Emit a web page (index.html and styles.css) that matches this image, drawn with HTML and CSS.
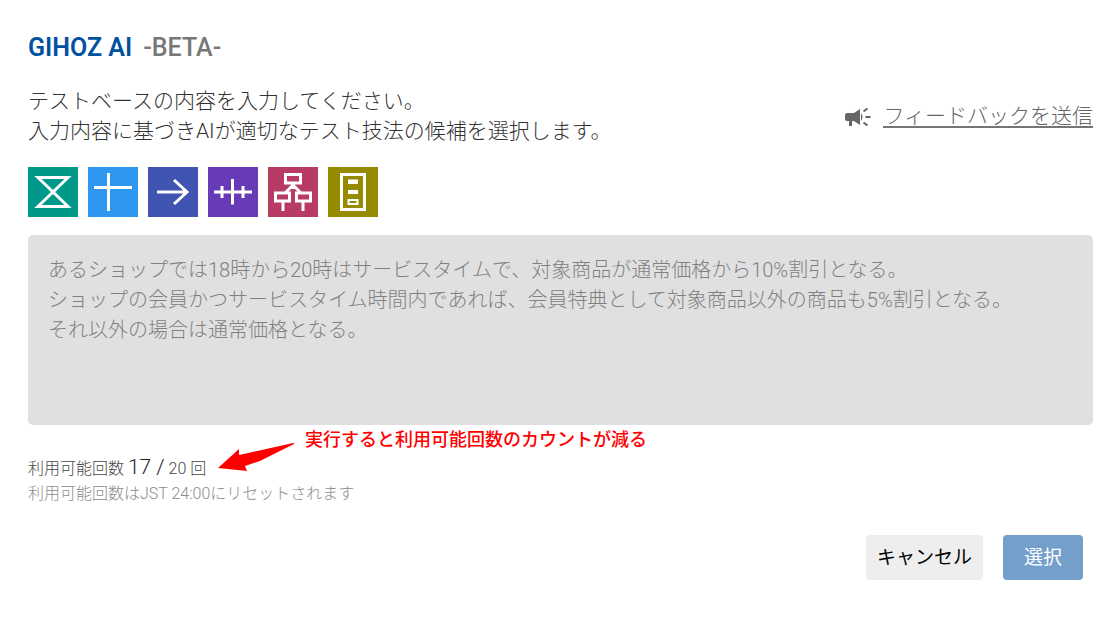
FILE: index.html
```html
<!DOCTYPE html>
<html lang="ja">
<head>
<meta charset="utf-8">
<meta name="viewport" content="width=device-width, initial-scale=1">
<title>GIHOZ AI</title>
<link rel="stylesheet" href="styles.css">
</head>
<body>
<main class="dialog">
  <h1 class="title">GIHOZ AI <span class="beta">-BETA-</span></h1>
  <div class="intro">
    <label class="lead" for="basis">テストベースの内容を入力してください。<br>入力内容に基づきAIが適切なテスト技法の候補を選択します。</label>
    <a class="feedback" href="#feedback">
      <svg class="horn" viewBox="0 0 26 22" aria-hidden="true">
        <path d="M2 7h7l6-4v16l-6-4H7v5H4v-5H2a2 2 0 0 1-2-2V9a2 2 0 0 1 2-2z" fill="currentColor"/>
        <path d="M16 7q3 4 0 8z" fill="currentColor"/>
        <path d="M18.500 5.500l4-3M20.500 11h5M18.500 16.500l4 3" fill="none" stroke="currentColor" stroke-width="2"/>
      </svg>
      <span class="feedback-text">フィードバックを送信</span>
    </a>
  </div>
  <div class="techniques">
    <svg class="tile teal" viewBox="0 0 50 50" aria-hidden="true"><path d="M10 10.500H40L10 39.500H40Z"/></svg>
    <svg class="tile sky" viewBox="0 0 50 50" aria-hidden="true"><path d="M6 20.500H44M20.500 6V44"/></svg>
    <svg class="tile indigo" viewBox="0 0 50 50" aria-hidden="true"><path d="M9 25H39M26 13L39 25L26 37"/></svg>
    <svg class="tile violet" viewBox="0 0 50 50" aria-hidden="true"><path d="M6 25H44M14 19V31M24.500 12V37.500M35 19V31"/></svg>
    <svg class="tile rose" viewBox="0 0 50 50" aria-hidden="true"><path d="M17.500 7.500H32.500V16H17.500ZM7.500 26H21.500V34H7.500ZM28.500 26H42.500V34H28.500ZM25 17V22M25 18L17 26M25 18L33 26M15 34V44M35 34V44"/></svg>
    <svg class="tile olive" viewBox="0 0 50 50" aria-hidden="true"><path d="M13.500 7.500H36.500V42.500H13.500Z"/><path class="solid" d="M20 12.500h10v4.500H20zM20 23h10v4H20z"/><path class="thin" d="M20.500 33h9v4h-9z"/></svg>
  </div>
  <textarea class="basis" id="basis" disabled placeholder="あるショップでは18時から20時はサービスタイムで、対象商品が通常価格から10%割引となる。&#10;ショップの会員かつサービスタイム時間内であれば、会員特典として対象商品以外の商品も5%割引となる。&#10;それ以外の場合は通常価格となる。"></textarea>
  <div class="usage">
    <p class="count">利用可能回数 <span class="used">17 /</span> 20 回</p>
    <p class="reset">利用可能回数はJST 24:00にリセットされます</p>
    <div class="note">
      <svg class="arrow" viewBox="0 0 78 32" aria-hidden="true"><path d="M0 26L21 7V13L75 1Q77 1 76 2L42 19L27 24L29 29Z" fill="#f00"/></svg>
      <span class="note-text">実行すると利用可能回数のカウントが減る</span>
    </div>
  </div>
  <div class="actions">
    <button class="button cancel" type="button">キャンセル</button>
    <button class="button select" type="button">選択</button>
  </div>
</main>
</body>
</html>
```
FILE: styles.css
```css
* { box-sizing: border-box; }
body {
  margin: 0;
  background: #fff;
  color: #333;
  font-family: Roboto, "Noto Sans CJK JP", sans-serif;
  font-weight: 300;
}
.dialog { padding: 32px 26px 38px 28px; }
.title {
  margin: 0;
  color: #0051a0;
  font-size: 25px;
  font-weight: 600;
  line-height: 32px;
}
.beta { margin-left: 5px; color: #777; font-weight: 500; }
.intro {
  display: flex;
  justify-content: space-between;
  align-items: center;
  margin-top: 22px;
}
.lead { font-size: 21px; line-height: 30px; }
.feedback {
  display: flex;
  align-items: center;
  gap: 12px;
  padding-top: 2px;
  color: #666;
  font-size: 21px;
  text-decoration: none;
}
.horn { width: 26px; height: 22px; }
.feedback-text { border-bottom: 2px solid #757575; line-height: 20px; }
.techniques { display: flex; gap: 10px; margin-top: 21px; }
.tile {
  width: 50px;
  height: 50px;
  fill: none;
  stroke: #fff;
  stroke-width: 3;
}
.solid { fill: #fff; stroke: none; }
.thin { stroke-width: 2; }
.teal { background: #009888; }
.sky { background: #2e98f0; }
.indigo { background: #4054b2; }
.violet { background: #673ab7; }
.rose { background: #b83b66; }
.olive { background: #968a00; }
.basis {
  display: block;
  width: 100%;
  height: 190px;
  margin-top: 18px;
  padding: 20px;
  border: 0;
  border-radius: 5px;
  background: #e0e0e0;
  font: 300 20px/30px Roboto, "Noto Sans CJK JP", sans-serif;
  resize: none;
}
.basis::placeholder { color: #808080; opacity: 1; }
.usage { position: relative; padding-top: 30px; }
.count, .reset { margin: 0; font-size: 16px; line-height: 25px; }
.count { color: #444; }
.used { color: #222; font-size: 21px; }
.reset { color: #8c8c8c; }
.note {
  position: absolute;
  top: 1px;
  left: 190px;
  display: flex;
  gap: 9px;
  color: #f00;
}
.arrow { width: 78px; height: 32px; margin-top: 16px; }
.note-text {
  font-size: 18px;
  font-weight: 500;
  line-height: 28px;
}
.actions {
  display: flex;
  justify-content: flex-end;
  gap: 20px;
  margin-top: 29px;
  padding-right: 10px;
}
.button {
  height: 45px;
  padding: 0 11px;
  border: 0;
  border-radius: 4px;
  font: 400 19px/30px Roboto, "Noto Sans CJK JP", sans-serif;
}
.cancel { background: #eee; color: #000; }
.select { padding: 0 21px; background: #759fcb; color: #fff; }
```
